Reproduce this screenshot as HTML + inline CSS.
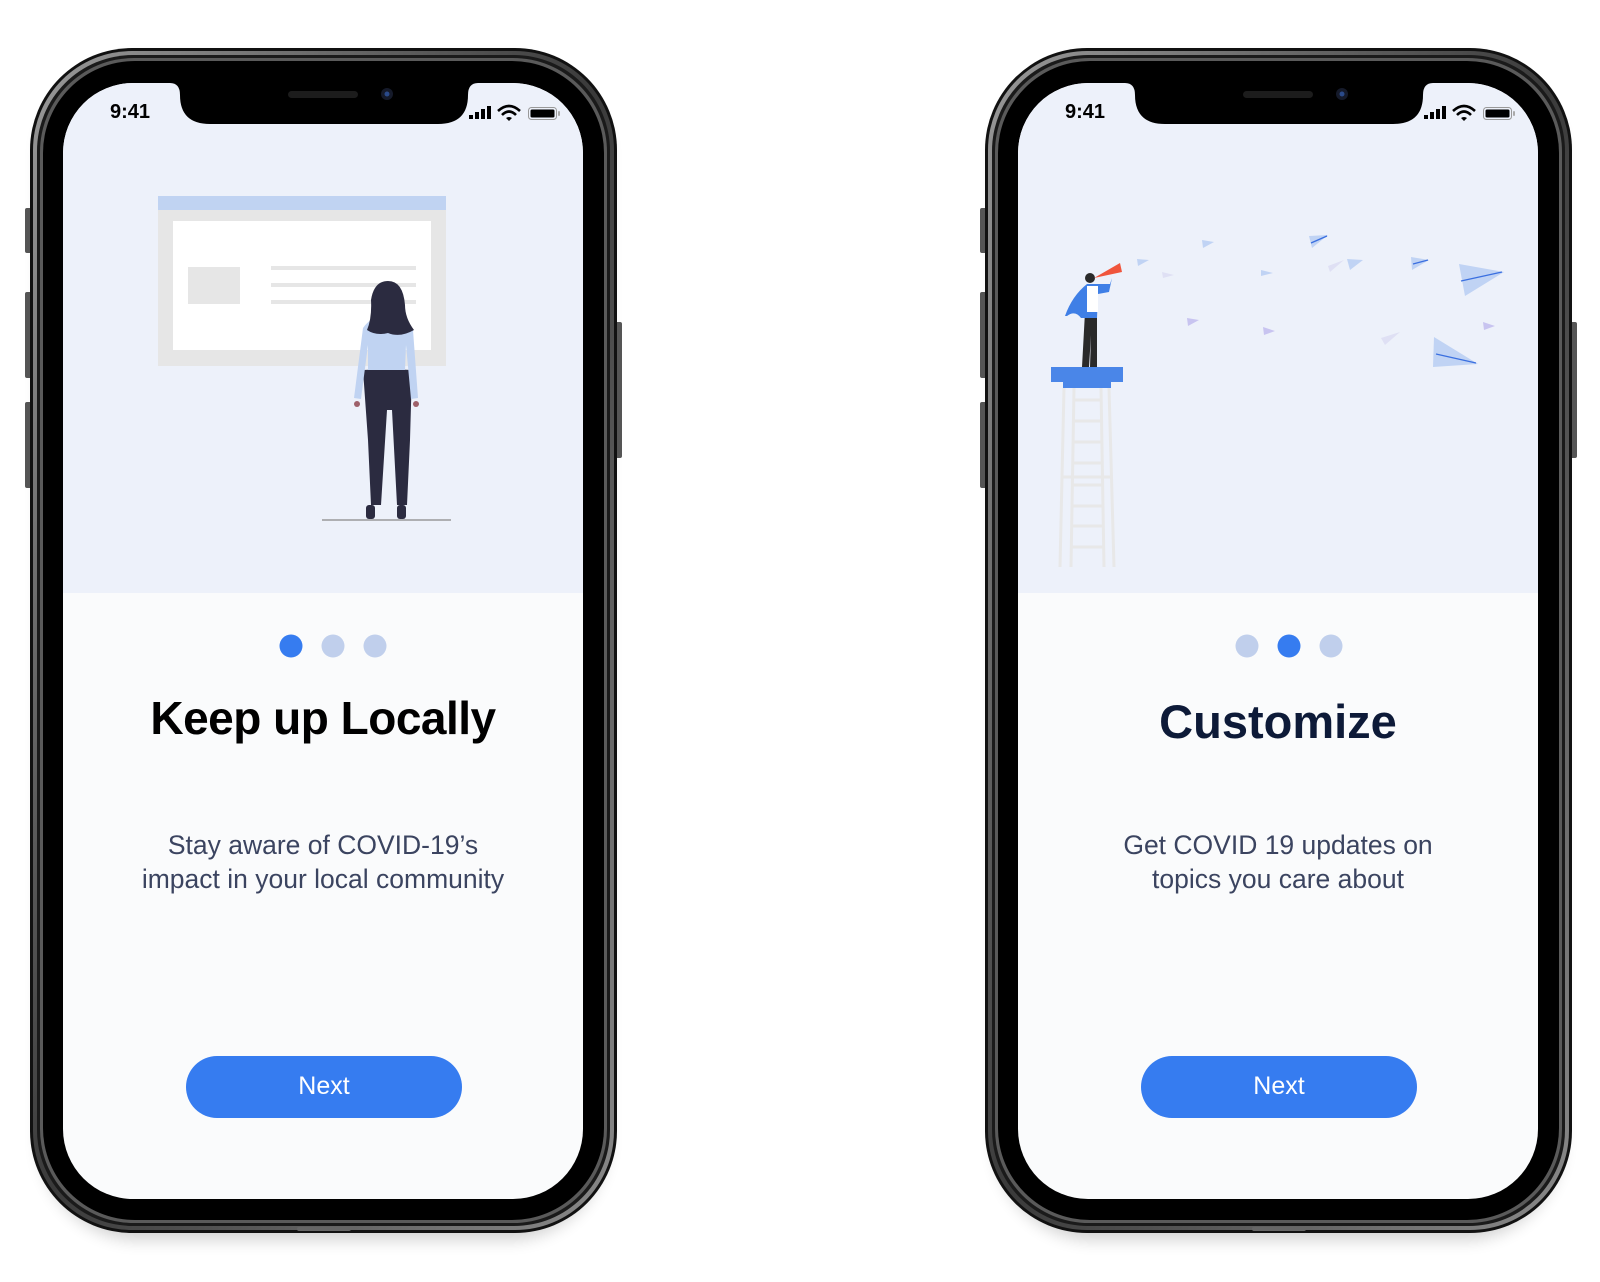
<!DOCTYPE html>
<html><head><meta charset="utf-8"><style>
html,body{margin:0;padding:0;background:#fff;}
body{width:1600px;height:1282px;position:relative;overflow:hidden;font-family:"Liberation Sans",sans-serif;}
.t{position:absolute;text-align:center;white-space:nowrap;}
</style></head><body>
<svg width="1600" height="1282" viewBox="0 0 1600 1282" style="position:absolute;left:0;top:0">
<defs>
<linearGradient id="ring" x1="0" y1="0" x2="1" y2="1">
<stop offset="0" stop-color="#9a9a9a"/><stop offset="0.5" stop-color="#3a3a3a"/><stop offset="1" stop-color="#8a8a8a"/></linearGradient>
<filter id="sh" x="-10%" y="-10%" width="120%" height="130%"><feGaussianBlur stdDeviation="8"/></filter>
<g id="phone">
 <rect x="40" y="60" width="567" height="1180" rx="100" fill="#000" opacity="0.18" filter="url(#sh)"/>
 <rect x="25" y="208" width="8" height="45" rx="2" fill="#555"/>
 <rect x="25" y="292" width="8" height="86" rx="2" fill="#555"/>
 <rect x="25" y="402" width="8" height="86" rx="2" fill="#555"/>
 <rect x="614" y="322" width="8" height="136" rx="2" fill="#555"/>
 <rect x="30" y="48" width="587" height="1185" rx="102" fill="#111"/>
 <rect x="33" y="51" width="581" height="1179" rx="99" fill="url(#ring)"/>
 <rect x="37" y="55" width="573" height="1171" rx="96" fill="#1a1a1a"/>
 <rect x="40" y="58" width="567" height="1165" rx="94" fill="#5a5a5a"/>
 <rect x="43" y="61" width="561" height="1159" rx="92" fill="#000"/>
 <clipPath id="scr"><rect x="63" y="83" width="520" height="1116" rx="70"/></clipPath>
 <rect x="63" y="83" width="520" height="1116" rx="70" fill="#fafbfc"/>
 <rect x="63" y="83" width="520" height="510" fill="#edf1fa" clip-path="url(#scr)"/>
 <path d="M170 83 Q180 83 180 95 Q180 124 210 124 H438 Q468 124 468 95 Q468 83 478 83 Z" fill="#000"/>
 <rect x="288" y="91" width="70" height="7" rx="3.5" fill="#1c1c1c"/>
 <circle cx="387" cy="94" r="6" fill="#151a2a"/><circle cx="387" cy="94" r="2.5" fill="#2a4a8a"/>
 <rect x="469" y="115" width="4" height="4" fill="#000"/><rect x="475" y="112" width="4" height="7" fill="#000"/>
 <rect x="481" y="109" width="4" height="10" fill="#000"/><rect x="487" y="106" width="4" height="13" fill="#000"/>
 <path d="M498 111 Q509 101 520 111" stroke="#000" stroke-width="2.6" fill="none"/>
 <path d="M502 115 Q509 108 516 115" stroke="#000" stroke-width="2.6" fill="none"/>
 <path d="M506 118 L509 121 L512 118 Q509 116 506 118Z" fill="#000"/>
 <rect x="528.5" y="107.5" width="28" height="12" rx="3" fill="none" stroke="#999" stroke-width="1"/>
 <rect x="530.5" y="109.5" width="24" height="8" rx="1.5" fill="#000"/>
 <rect x="558" y="111" width="2" height="5" rx="1" fill="#aaa"/>
 <rect x="297" y="1227" width="54" height="4" rx="2" fill="#666"/>
</g>
</defs>
<use href="#phone"/>
<use href="#phone" x="955"/>
<!-- left illustration -->
<rect x="158" y="196" width="288" height="170" fill="#e6e6e6"/>
<rect x="158" y="196" width="288" height="14" fill="#c0d3f2"/>
<rect x="173" y="221" width="258" height="129" fill="#fff"/>
<rect x="188" y="267" width="52" height="37" fill="#e6e6e6"/>
<rect x="271" y="266" width="145" height="4" fill="#e6e6e6"/>
<rect x="271" y="283" width="145" height="4" fill="#e6e6e6"/>
<rect x="271" y="300" width="145" height="4" fill="#e6e6e6"/>
<line x1="322" y1="520" x2="451" y2="520" stroke="#999" stroke-width="1.5"/>
<path d="M363 370 L388 369 L412 370 L410 440 L407 505 L397 505 L392 410 L387 410 L381 505 L371 505 L368 440 Z" fill="#2b2b40"/>
<path d="M363 328 Q372 315 388 316 Q405 316 413 330 L418 398 L411 399 L406 345 L405 370 L368 370 L368 345 L361 399 L354 398 Z" fill="#c0d3f2"/>
<circle cx="357" cy="404" r="3" fill="#9e616a"/><circle cx="416" cy="404" r="3" fill="#9e616a"/>
<path d="M371 300 Q374 281 388 281 Q403 281 405 305 Q405 318 414 330 Q400 338 388 333 Q376 336 367 330 Q372 318 371 300 Z" fill="#2b2b40"/>
<rect x="366" y="505" width="9" height="14" rx="3" fill="#2b2b40"/><rect x="397" y="505" width="9" height="14" rx="3" fill="#2b2b40"/>
<!-- right illustration -->
<g stroke="#e8e8e8" stroke-width="3" fill="none">
<line x1="1064" y1="388" x2="1060" y2="567"/><line x1="1109" y1="388" x2="1114" y2="567"/>
<line x1="1074" y1="388" x2="1071" y2="567"/><line x1="1101" y1="388" x2="1104" y2="567"/>
<line x1="1073" y1="400" x2="1102" y2="400"/><line x1="1073" y1="421" x2="1102" y2="421"/>
<line x1="1073" y1="442" x2="1102" y2="442"/><line x1="1073" y1="463" x2="1102" y2="463"/>
<line x1="1062" y1="477" x2="1112" y2="477"/><line x1="1072" y1="485" x2="1103" y2="485"/>
<line x1="1072" y1="506" x2="1103" y2="506"/><line x1="1072" y1="526" x2="1103" y2="526"/><line x1="1072" y1="547" x2="1103" y2="547"/>
</g>
<rect x="1051" y="367" width="72" height="15" fill="#4a86e8"/>
<rect x="1063" y="382" width="48" height="6" fill="#4a86e8"/>
<path d="M1085 312 L1097 312 L1097 367 L1090 367 L1091 335 L1089 367 L1082 367 Z" fill="#2a2a2a"/>
<path d="M1087 284 L1098 284 L1110 284 L1112 278 L1109 292 L1098 294 L1097 318 L1081 318 Q1075 310 1067 316 L1065 316 Q1072 296 1087 284Z" fill="#3f7fe6"/>
<rect x="1087" y="286" width="11" height="26" fill="#fff"/>
<circle cx="1090" cy="278" r="5" fill="#2a2a2a"/>
<path d="M1094 278 L1120 263 L1122 272 Z" fill="#f0553c"/>
<g fill="#c0d3f4">
<path d="M1137 259 L1149 260 L1138 266Z"/><path d="M1202 240 L1214 242 L1203 248Z"/>
<path d="M1309 236 L1328 235 L1312 248Z"/><path d="M1261 270 L1273 273 L1261 276Z"/>
<path d="M1347 259 L1363 260 L1350 270Z"/><path d="M1411 257 L1429 260 L1412 270Z"/>
<path d="M1459 264 L1504 272 L1465 296Z"/><path d="M1434 337 L1478 364 L1433 367Z"/>
</g>
<g fill="#c8c4f0"><path d="M1187 318 L1199 320 L1188 326Z"/><path d="M1263 327 L1275 331 L1264 335Z"/><path d="M1483 322 L1495 326 L1484 330Z"/></g>
<g fill="#dfe0f4"><path d="M1162 272 L1174 275 L1163 278Z"/><path d="M1328 266 L1344 260 L1330 272Z"/><path d="M1381 338 L1400 332 L1385 345Z"/></g>
<g stroke="#3a6fe0" stroke-width="1.3"><line x1="1461" y1="281" x2="1502" y2="272"/><line x1="1436" y1="354" x2="1476" y2="363"/><line x1="1311" y1="243" x2="1327" y2="236"/><line x1="1413" y1="264" x2="1428" y2="260"/></g>
<!-- dots -->
<circle cx="291" cy="646" r="11.5" fill="#367cf0"/><circle cx="333" cy="646" r="11.5" fill="#c0cfec"/><circle cx="375" cy="646" r="11.5" fill="#c0cfec"/>
<circle cx="1247" cy="646" r="11.5" fill="#c0cfec"/><circle cx="1289" cy="646" r="11.5" fill="#367cf0"/><circle cx="1331" cy="646" r="11.5" fill="#c0cfec"/>
<!-- buttons -->
<rect x="186" y="1056" width="276" height="62" rx="31" fill="#367cf0"/>
<rect x="1141" y="1056" width="276" height="62" rx="31" fill="#367cf0"/>
</svg>
<div class="t" style="left:110px;top:101px;font-size:20px;font-weight:bold;color:#000;">9:41</div>
<div class="t" style="left:1065px;top:101px;font-size:20px;font-weight:bold;color:#000;">9:41</div>
<div class="t" style="left:63px;width:520px;top:691px;font-size:46px;font-weight:bold;color:#000;letter-spacing:-0.5px;">Keep up Locally</div>
<div class="t" style="left:1018px;width:520px;top:694px;font-size:47px;font-weight:bold;color:#0d1a38;">Customize</div>
<div class="t" style="left:63px;width:520px;top:828px;font-size:26.5px;line-height:34px;color:#3b4460;">Stay aware of COVID-19’s<br>impact in your local community</div>
<div class="t" style="left:1018px;width:520px;top:828px;font-size:26.5px;line-height:34px;color:#3b4460;">Get COVID 19 updates on<br>topics you care about</div>
<div class="t" style="left:186px;width:276px;top:1072px;font-size:25px;color:#fff;">Next</div>
<div class="t" style="left:1141px;width:276px;top:1072px;font-size:25px;color:#fff;">Next</div>
</body></html>
